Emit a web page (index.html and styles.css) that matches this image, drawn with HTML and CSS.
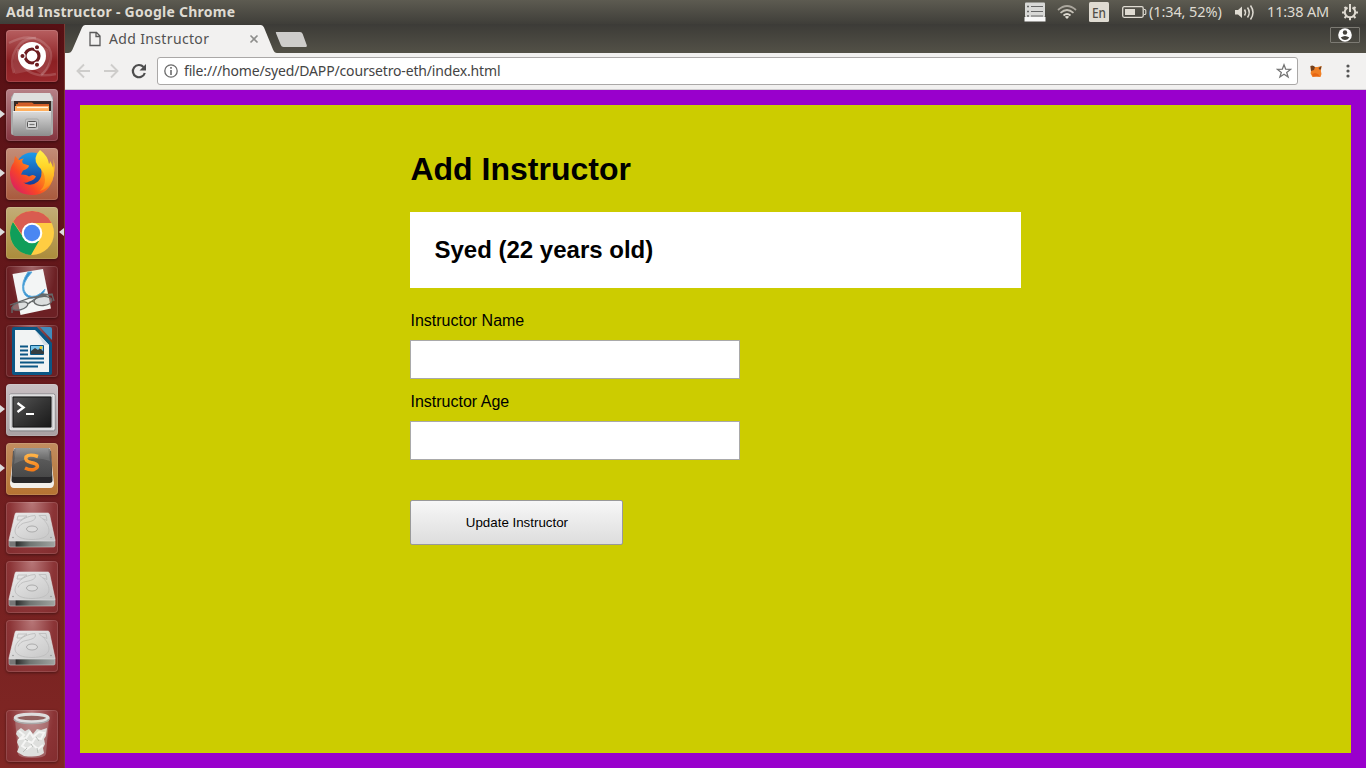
FILE: index.html
```html
<!DOCTYPE html>
<html lang="en">
<head>
<meta charset="utf-8">
<title>Add Instructor</title>
<link rel="stylesheet" href="styles.css">
</head>
<body>
<svg class="defs" width="0" height="0">
  <defs>
    <linearGradient id="silver" x2="0" y2="1"><stop stop-color="#dcdcdc"/><stop offset="1" stop-color="#8d8d8d"/></linearGradient>
    <linearGradient id="diskTop" x2="1" y2="1"><stop stop-color="#ececec"/><stop offset="1" stop-color="#c4c4c4"/></linearGradient>
    <linearGradient id="diskFront"><stop stop-color="#777"/><stop offset=".13" stop-color="#777"/><stop offset=".16" stop-color="#2d2f2e"/><stop offset=".45" stop-color="#6f7471"/><stop offset="1" stop-color="#a0a4a1"/></linearGradient>
    <linearGradient id="screen" x2="1" y2="1"><stop stop-color="#555"/><stop offset=".5" stop-color="#353535"/><stop offset="1" stop-color="#191919"/></linearGradient>
    <linearGradient id="keyTop" x2="0" y2="1"><stop stop-color="#8a8a8a"/><stop offset=".35" stop-color="#5b5b5b"/><stop offset="1" stop-color="#484848"/></linearGradient>
    <linearGradient id="fox" x1="1" x2="0" y1=".1" y2=".9"><stop stop-color="#ffd226"/><stop offset=".3" stop-color="#ff9a16"/><stop offset=".65" stop-color="#f94527"/><stop offset="1" stop-color="#d3166f"/></linearGradient>
    <linearGradient id="tail" x2="0" y2="1"><stop stop-color="#fff04a"/><stop offset=".4" stop-color="#ffd52a"/><stop offset="1" stop-color="#ff851a"/></linearGradient>
    <linearGradient id="globe" x2="0" y2="1"><stop stop-color="#1c9bea"/><stop offset="1" stop-color="#153a94"/></linearGradient>
    <linearGradient id="orange" x2="0" y2="1"><stop stop-color="#ffb246"/><stop offset="1" stop-color="#f57b17"/></linearGradient>
    <symbol id="disk" viewBox="0 0 52 52">
      <path d="M3 38h46v5.500q0 1.500-1.500 1.500h-43Q3 45 3 43.500z" fill="url(#diskFront)" stroke="#c4c4c4" stroke-width=".6"/>
      <path d="M10 11h32q1 0 1.500 1.500L49 38q0 1-1 1H4q-1 0-1-1l6-25.500Q9.300 11 10 11z" fill="url(#diskTop)" stroke="#e6e6e6" stroke-width=".6"/>
      <path d="M29 13.500C18 14 9 22 9 29c0 6 8 8.500 17 8.500S43 35 43 29c0-5-3-9-6-12M29 13.500c2 4-3 6-9 7-4 .6-7 3-8 6M12 14h9l-6 4h-4zM33 13.500h7l1 5-5-2z" fill="none" stroke="#bdbdbd" stroke-width=".9"/>
      <ellipse cx="26" cy="27" rx="5.500" ry="3" fill="#dcdcdc" stroke="#a6a6a6" stroke-width=".9"/>
      <circle cx="7" cy="35.500" r=".7" fill="#888"/><circle cx="45" cy="35.500" r=".7" fill="#888"/>
    </symbol>
  </defs>
</svg>

<header class="panel">
  <span class="panel-title">Add Instructor - Google Chrome</span>
  <svg class="panel-icons" width="126" height="24" viewBox="1021 0 126 24">
    <rect x="1025" y="2.500" width="20" height="14.500" rx="1" fill="#d8d8d6"/><path d="M1024.500 17h21v4.500h-21z" fill="#f8f8f8"/>
    <path d="M1031 6.500h12M1031 11.500h12M1031 16h12" stroke="#666" stroke-width="1.200"/>
    <path d="M1027 6.500h2M1027 11.500h2M1027 16h2" stroke="#666" stroke-width="1.400"/>
    <g fill="none" stroke-width="1.700"><path d="M1058 10q9-8 18 0" stroke="#aaa69d"/><path d="M1060.500 12.800q6.500-5.600 13 0" stroke="#c5c1b7"/><path d="M1063.500 15.500q3.500-3 7 0" stroke="#dfdbd2"/></g><path d="M1064.800 16.700q2.200-1.400 4.400 0l-2.200 2.300z" fill="#dfdbd2"/>
    <rect x="1089" y="2" width="20" height="20" rx="1.500" fill="#dfdbd2"/>
    <text class="keyboard" x="1092" y="17.500" textLength="14" lengthAdjust="spacingAndGlyphs">En</text>
    <rect x="1122.700" y="6.700" width="20.500" height="10.600" rx="1.500" fill="none" stroke="#dfdbd2" stroke-width="1.300"/><path d="M1125 9h10v6h-10z" fill="#dfdbd2"/><path d="M1144 9.500h.8q1 0 1 1v3q0 1-1 1h-.8" fill="none" stroke="#dfdbd2" stroke-width="1.100"/>
  </svg>
  <span class="battery-text">(1:34, 52%)</span>
  <svg class="volume" width="22" height="24" viewBox="1234 0 22 24"><path d="M1235 10h3l4-3.500v11.500l-4-3.500h-3z" fill="#dfdbd2"/><g fill="none" stroke="#dfdbd2" stroke-width="1.500"><path d="M1244.500 9.500q2 3 0 6"/><path d="M1247.500 7.500q3.500 5 0 10"/><path d="M1250.500 5.500q5 7 0 14"/></g></svg>
  <span class="clock">11:38 AM</span>
  <svg class="gear" width="18" height="24" viewBox="-9 -12 18 24"><g fill="none" stroke="#dfdbd2"><path d="M-2.500-4.500a5.200 5.200 0 1 0 5 0" stroke-width="2"/><path d="M0-8v8" stroke-width="2"/><path d="M-8 .5h3M5 .5h3M-5.500 6l2-2M5.500 6l-2-2M0 5v3.200M-5.500-5l2 2M5.500-5l-2 2" stroke-width="2"/></g></svg>
</header>

<div class="desktop">
  <nav class="launcher">
    <div class="tile dash"><svg viewBox="0 0 52 52"><g fill="none" stroke="#fff" stroke-opacity=".16" stroke-width="2.500"><path d="M8 43C2 27 12 7 30 8"/><path d="M3 13Q28 0 43 18c5 9 0 21-8 27"/><path d="M12 19c2 25 19 29 38 25"/></g><path d="M9 44C4 25 13 14 26 12L42 19q5 16-5 26l-8-5z" fill="#fff" opacity=".12"/><circle cx="26" cy="26" r="14" fill="#fff"/><circle cx="26" cy="26" r="7" fill="none" stroke="#6d1c20" stroke-width="3.200"/><g fill="#6d1c20" stroke="#fff" stroke-width="1.100"><circle cx="16.500" cy="26" r="2.600"/><circle cx="31" cy="17.300" r="2.600"/><circle cx="31" cy="34.700" r="2.600"/></g></svg></div>
    <div class="tile files running"><svg viewBox="0 0 52 52"><path d="M8 4h36l3 4v36q0 2-2 2H7q-2 0-2-2V8z" fill="#a9a9a9"/><path d="M8 4h36l3 8H5z" fill="#dedede"/><path d="M8 12h37v12H8z" fill="#352a24"/><path d="M12 13.500h14l2 1.500h15v9H10v-9h2z" fill="#d25e28"/><path d="M9 17h34v7H9z" fill="#ffae5c"/><path d="M11 18.500h31" stroke="#fff4df" stroke-width="1.300"/><path d="M7 22h38v23q0 2-2 2H9q-2 0-2-2z" fill="url(#silver)"/><path d="M7 22.500h38" stroke="#f0f0f0"/><rect x="19.500" y="30" width="13" height="11" rx="1.500" fill="#c2c2c2" stroke="#999" stroke-width=".6"/><rect x="21.500" y="32.500" width="9" height="6" rx="1" fill="#ddd" stroke="#555"/><path d="M23.500 35.500h5" stroke="#777" stroke-width="1.300"/></svg></div>
    <div class="tile firefox running"><svg viewBox="0 0 52 52"><circle cx="26" cy="21" r="16.500" fill="url(#globe)"/><path d="M8 14L9 8l4 4q2-1.500 5-1.500-3 2-1 5l6 2q0 3-6 5l-2 4q6 0 8 2 4-3 7 0-2 4-7 5-3 2-6 1 8 5 15-1 5-5 3-13l10 4q4-7 2-14 3 8 .5 17Q44 47 26 47 5 46 4 27 3.500 20 8 14z" fill="url(#fox)"/><path d="M34 2q-8 8-2 16 7 6 7 14 0 6-5 11 12-4 14-16 0-8-4-14 0 3-1 3-1-8-9-14z" fill="url(#tail)"/></svg></div>
    <div class="tile chrome running focused"><svg viewBox="0 0 52 52"><circle cx="26" cy="26" r="22" fill="#ffcd42"/><path d="M7 15A22 22 0 0 0 25 48l8-14-7-2-9-2z" fill="#109e5a"/><path d="M26 16h19.600A22 22 0 0 0 7.200 14.500L17.500 30z" fill="#d95c50"/><circle cx="26" cy="26" r="10.300" fill="#fff"/><circle cx="26" cy="26" r="8.200" fill="#4b87f2"/></svg></div>
    <div class="tile viewer"><svg viewBox="0 0 52 52"><path d="M6.500 8L37 3l8 39.500L14.500 49z" fill="#f3f5f5"/><path d="M26 6Q16 17 18 24q3 8 12 6 5-2 9-7-1 6-7 8-12 4-15-6-2-9 5-19z" fill="#328dcd" stroke="#5eadde"/><g fill="#bfc4c3" fill-opacity=".45" stroke="#65696a" stroke-width="1.300"><ellipse cx="14" cy="40" rx="8" ry="3.700" transform="rotate(-16 14 40)"/><ellipse cx="37" cy="35" rx="9" ry="4.500" transform="rotate(-4 37 35)"/><path d="M22 38q3-4 6-2M4 39l20-7 22-4 2 7M22 38l14-10 11 1M6 41v6" fill="none"/></g></svg></div>
    <div class="tile writer"><svg viewBox="0 0 52 52"><path d="M8 2h23l15 16v30q0 2-2 2H8q-2 0-2-2V4q0-2 2-2z" fill="#0b5684"/><path d="M34 2h10q2 0 2 2v11z" fill="#418cbc"/><path d="M9 5h20l14 15v27H9z" fill="#f1f3f3"/><path d="M29 5l14 15h-5z" fill="#d2dfe6"/><path d="M14 21.500h8M14 25.500h8M14 29.500h8M14 33.500h24M14 37.500h24M14 41.500h18" stroke="#0b5684" stroke-width="2"/><path d="M24.500 20.500h13v9h-13z" fill="#79c4e8" stroke="#0b5684"/><path d="M25 29v-3l4-3 3 2 2-2 4 4v2z" fill="#353d40"/><circle cx="35" cy="22.500" r="1.500" fill="#f2c72a"/></svg></div>
    <div class="tile terminal running"><svg viewBox="0 0 52 52"><rect x="3.500" y="10" width="45.500" height="37" rx="1.500" fill="#c7c7c9" stroke="#858588"/><path d="M4 11h44v34H4z" fill="none" stroke="#f6f6f6"/><path d="M7 13h38v30H7z" fill="url(#screen)" stroke="#161616"/><path d="M11.500 19l6 4.500-6 4.500" stroke="#fff" stroke-width="2.400" fill="none"/><path d="M20 30h8" stroke="#fff" stroke-width="2"/></svg></div>
    <div class="tile sublime running"><svg viewBox="0 0 52 52"><path d="M8 5h36l4 35q0 5-4 5H8q-4 0-4-5z" fill="#f3f0eb"/><path d="M7 8h38l1.500 29q0 3-3 3h-35q-3 0-3-3z" fill="#29282a"/><path d="M10 5h32q2 0 2.500 2L46 32q0 2-2 2H8q-2 0-2-2L7.500 7q.5-2 2.500-2z" fill="url(#keyTop)"/><path d="M10 5h32l2 13Q26 12 8 21z" fill="#fff" opacity=".12"/><path d="M32 13.500q-9-3-12 .5-1.500 4 5 5.500c8 1.500 8 5 3 7q-4 1-9-1.500" fill="none" stroke="url(#orange)" stroke-width="3.500"/></svg></div>
    <div class="tile"><svg><use href="#disk"/></svg></div>
    <div class="tile"><svg><use href="#disk"/></svg></div>
    <div class="tile"><svg><use href="#disk"/></svg></div>
    <div class="tile trash"><svg viewBox="0 0 52 52"><path d="M9 9l3 35q1 4 14 4t14-4l3-35" fill="#ddd" opacity=".28"/><path d="M11 21l4-3 4 3 4-2 4 5 4-5 4 1 6-2-1 8-2 3 1 5-2 4 1 5q-5 5-20 3l-7-4 2-5-2-5 2-4-3-4z" fill="#dedfdd"/><path d="M13 21l5 4-4 4 6-1 4-6 3 5 6-5 5 1-3 6-6-1-3 5-6-3-4 6 5 3 6-4 5 4 5-4" fill="none" stroke="#f5f5f4" stroke-width="2"/><path d="M19 29l3 2M30 27l3 4M21 38l-4 4M31 38l1 5M25 34l2 3" stroke="#b9bdb9"/><ellipse cx="25.700" cy="8" rx="16.500" ry="3.700" fill="#91605e" stroke="#dedede" stroke-width="3"/><path d="M8 9q2 4.500 17.500 4.500T43 9" fill="none" stroke="#aaa" stroke-width="1.500"/></svg></div>
  </nav>

  <main class="browser">
    <div class="tabs">
      <svg class="tab-shape" width="245" height="28" viewBox="68 25 245 28"><path d="M68 53q3 0 4.500-3.500L82 27.500q1-2.500 3-2.500h176q2 0 3 2.500l9 22q1.500 3.500 4 3.500z" fill="#f2f1f0"/><path d="M276 32h24q2 0 2.700 2l4 11q.7 2-1.500 2h-21.700q-2 0-2.700-2l-4.500-11q-.8-2-.3-2z" fill="#cecdcb"/></svg>
      <div class="tab-content">
        <svg width="12" height="16" viewBox="0 0 12 16"><path d="M1 1.500h6.500L11 5v9.500H1zM7 1.500v4h4" fill="none" stroke="#5a5a5a" stroke-width="1.300"/></svg>
        <span class="tab-title">Add Instructor</span>
        <svg class="close" width="10" height="10"><path d="M1.500 1.500l7 7m0-7l-7 7" stroke="#8d8d8b" stroke-width="1.600"/></svg>
      </div>
      <div class="profile"><svg width="14" height="14" viewBox="0 0 14 14"><circle cx="7" cy="7" r="6.800" fill="#fff"/><circle cx="7" cy="4.500" r="2.200" fill="#44423c"/><path d="M2.700 9.500Q7 6.500 11.300 9.500 9.500 12 7 12T2.700 9.500z" fill="#44423c"/></svg></div>
    </div>
    <div class="toolbar">
      <svg class="nav-icons" width="92" height="36" viewBox="65 53 92 36"><g fill="none" stroke="#cecdcb" stroke-width="1.900"><path d="M90 71H77.500m6.500-6.500L77.500 71l6.500 6.500"/><path d="M104 71h13.500m-6.500-6.500l6.500 6.500-6.500 6.500"/></g><path d="M143.500 67a6.100 6.100 0 1 0 1.300 6" fill="none" stroke="#4d4d4d" stroke-width="2.200"/><path d="M146 64v6.500h-6.500z" fill="#4d4d4d"/></svg>
      <div class="address">
        <svg width="14" height="14"><circle cx="7" cy="7" r="6.200" fill="none" stroke="#6b6b6b" stroke-width="1.300"/><path d="M7 6v5M7 3v1.700" stroke="#6b6b6b" stroke-width="1.600"/></svg>
        <span class="url">file:///home/syed/DAPP/coursetro-eth/index.html</span>
        <svg class="star" width="16" height="16"><path d="M8 1.800l1.700 4.400 4.800.2-3.800 3 1.400 4.600L8 11.300 3.900 14l1.400-4.600-3.800-3 4.800-.2z" fill="none" stroke="#747474" stroke-width="1.300"/></svg>
      </div>
      <svg class="metamask" width="12" height="12"><path d="M.5 1l4 1h3l4-1-.6 5 .6 3-1 3-4-.5-4 .5L.6 8.500 1 6z" fill="#f08025"/><path d="M.5 1Q3-.5 5 2l-1 3-3 1zM8.500 3l3-2-.6 3-1 1z" fill="#71401e"/><path d="M2 9l3-1 3 1 2 2.500H3z" fill="#e86612"/></svg>
      <svg class="more" width="4" height="14"><g fill="#555"><circle cx="2" cy="2" r="1.600"/><circle cx="2" cy="7" r="1.600"/><circle cx="2" cy="12" r="1.600"/></g></svg>
    </div>
    <section class="page">
      <div class="container">
        <h1>Add Instructor</h1>
        <h2>Syed (22 years old)</h2>
        <label for="name">Instructor Name</label>
        <input id="name" type="text">
        <label for="age">Instructor Age</label>
        <input id="age" type="text">
        <button>Update Instructor</button>
      </div>
    </section>
  </main>
</div>
</body>
</html>
```
FILE: styles.css
```css
* { box-sizing: border-box; }
body { margin: 0; width: 1366px; height: 768px; overflow: hidden; font-family: "Noto Sans", sans-serif; }
svg { display: block; flex: none; }
.defs { position: absolute; }
.panel { height: 24px; display: flex; align-items: center; padding-left: 6px; background: linear-gradient(#5d5b51, #3f3e39); color: #dfdbd2; white-space: nowrap; }
.panel > span { padding-bottom: 2px; }
.panel-title { width: 1015px; font-size: 14px; font-weight: 700; letter-spacing: .26px; }
.keyboard { font-size: 14px; font-weight: 500; fill: #504e47; }
.battery-text { width: 87px; padding-left: 2px; font-size: 14.5px; letter-spacing: -.1px; }
.clock { width: 74px; padding-left: 11px; font-size: 14.5px; letter-spacing: -.15px; }
.gear { margin-left: 11px; }
.desktop { display: flex; height: 744px; }
.launcher { width: 65px; height: 744px; display: flex; flex-direction: column; gap: 7px; padding: 6px 0 6px 6px; background: linear-gradient(#571014, #681a1d 45%, #812724); border-right: 1px solid #7c3c35; }
.tile { width: 52px; height: 52px; flex: none; border-radius: 4px; background: radial-gradient(ellipse at 50% 0, #b77778, #8b3436 60%, #822c2e); box-shadow: inset 0 0 0 1px #ffffff20, 0 1px 3px #0006; position: relative; }
.tile > svg { width: 52px; height: 52px; }
.tile.dash { background: linear-gradient(#b75f60, #8c2023 60%, #98282c); }
.tile.files { background: linear-gradient(#b68086, #84343f); }
.tile.firefox { background: linear-gradient(#c48d78, #a95a3d); }
.tile.chrome { background: linear-gradient(#c3ad77, #ab8c3b); }
.tile.viewer, .tile.writer { background: radial-gradient(ellipse at 50% 0, #a16568, #6c2024 65%); }
.tile.terminal { background: linear-gradient(#c9c0c3, #a9a0a3); }
.tile.sublime { background: linear-gradient(#c28d60, #b67332); }
.tile.trash { margin-top: auto; }
.running::before { content: ""; position: absolute; left: -6px; top: 21px; border: 4.5px solid transparent; border-left: 5px solid #ddd; border-right: 0; }
.focused::after { content: ""; position: absolute; right: -6px; top: 21px; border: 4.5px solid transparent; border-right: 5px solid #ddd; border-left: 0; }
.browser { width: 1301px; display: flex; flex-direction: column; }
.tabs { height: 29px; display: grid; grid-template-columns: 248px 1fr; background: linear-gradient(#3c3b37, #535147); }
.tab-shape { grid-area: 1 / 1; margin: 1px 0 0 3px; }
.tab-content { grid-area: 1 / 1; display: flex; align-items: center; height: 30px; padding-left: 24px; z-index: 1; }
.tab-title { width: 152px; padding: 0 0 2px 8px; font-size: 14px; letter-spacing: .35px; color: #525252; white-space: nowrap; }
.close { margin-left: -4px; }
.profile { grid-area: 1 / 2; justify-self: end; width: 30px; height: 16px; margin: 3px 6px 0; border: 1px solid #7c7a73; border-radius: 1px; display: flex; align-items: center; justify-content: center; }
.toolbar { height: 37px; display: flex; align-items: center; background: #f2f1f0; border-bottom: 1px solid #cfcdd0; }
.address { width: 1141px; height: 28px; display: flex; align-items: center; border: 1px solid #aaa8a7; border-radius: 3px; padding: 0 5px 0 6px; background: #fff; }
.url { padding: 0 0 2px 6px; font-size: 14px; letter-spacing: -.16px; color: #444; }
.star { margin-left: auto; }
.metamask { margin-left: 12px; }
.more { margin-left: 24px; }
.page { height: 678px; border: 15px solid #90c; background: #cc0; font-family: "Liberation Sans", sans-serif; color: #000; }
.container { width: 610.08px; margin: 0 auto; padding-top: 46px; display: flex; flex-direction: column; align-items: flex-start; }
h1 { margin: 0; font-size: 32px; line-height: 36px; }
h2 { width: 610.08px; height: 76px; margin: 25px 0 24px; padding: 24px; background: #fff; font-size: 24px; line-height: 28px; }
label { font-size: 16px; line-height: 18px; }
input { width: 329.44px; height: 39px; margin: 10px 0 14px; border: 1px solid #a9a9a9; border-radius: 0; background: #fff; }
button { width: 213px; height: 45px; margin-top: 26px; border: 1px solid #999; border-radius: 2px; background: linear-gradient(#f7f7f7, #ddd); font: 13.333px "Liberation Sans", sans-serif; color: #000; }
```
